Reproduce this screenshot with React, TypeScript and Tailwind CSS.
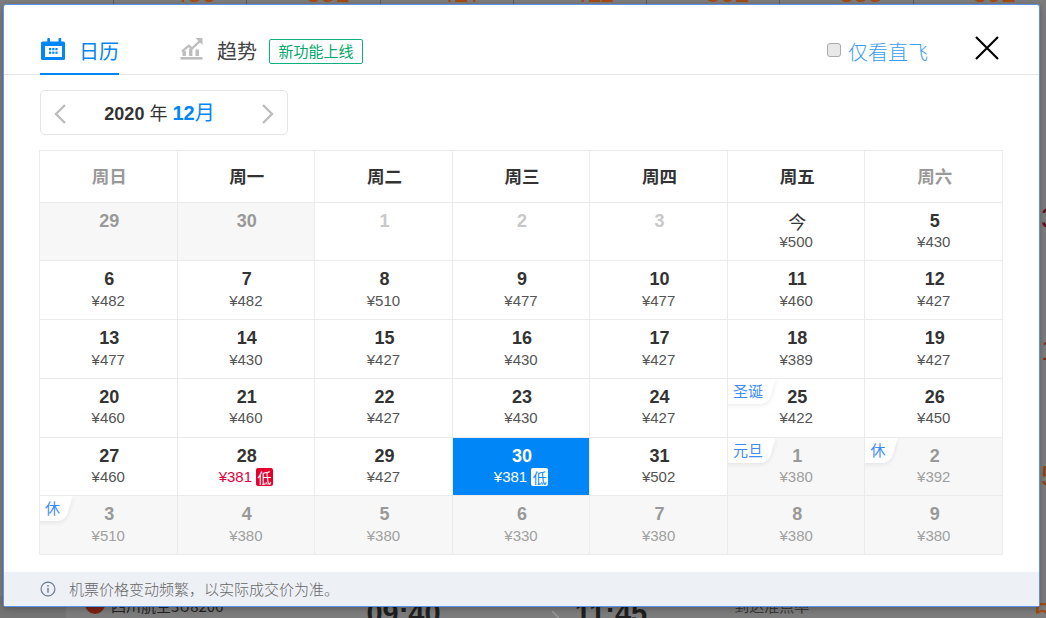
const weekdays = [
  { t: "周日", off: true },
  { t: "周一" },
  { t: "周二" },
  { t: "周三" },
  { t: "周四" },
  { t: "周五" },
  { t: "周六", off: true },
];

type Cell = {
  d: string;
  p?: string;
  kind?: "past" | "muted" | "next";
  tag?: string;
  low?: boolean;
  sel?: boolean;
};

const rows: Cell[][] = [
  [
    { d: "29", kind: "past" },
    { d: "30", kind: "past" },
    { d: "1", kind: "muted" },
    { d: "2", kind: "muted" },
    { d: "3", kind: "muted" },
    { d: "今", p: "500" },
    { d: "5", p: "430" },
  ],
  [
    { d: "6", p: "482" },
    { d: "7", p: "482" },
    { d: "8", p: "510" },
    { d: "9", p: "477" },
    { d: "10", p: "477" },
    { d: "11", p: "460" },
    { d: "12", p: "427" },
  ],
  [
    { d: "13", p: "477" },
    { d: "14", p: "430" },
    { d: "15", p: "427" },
    { d: "16", p: "430" },
    { d: "17", p: "427" },
    { d: "18", p: "389" },
    { d: "19", p: "427" },
  ],
  [
    { d: "20", p: "460" },
    { d: "21", p: "460" },
    { d: "22", p: "427" },
    { d: "23", p: "430" },
    { d: "24", p: "427" },
    { d: "25", p: "422", tag: "圣诞" },
    { d: "26", p: "450" },
  ],
  [
    { d: "27", p: "460" },
    { d: "28", p: "381", low: true },
    { d: "29", p: "427" },
    { d: "30", p: "381", low: true, sel: true },
    { d: "31", p: "502" },
    { d: "1", p: "380", kind: "next", tag: "元旦" },
    { d: "2", p: "392", kind: "next", tag: "休" },
  ],
  [
    { d: "3", p: "510", kind: "next", tag: "休" },
    { d: "4", p: "380", kind: "next" },
    { d: "5", p: "380", kind: "next" },
    { d: "6", p: "330", kind: "next" },
    { d: "7", p: "380", kind: "next" },
    { d: "8", p: "380", kind: "next" },
    { d: "9", p: "380", kind: "next" },
  ],
];

const rowHeights = ["h-[58px]", "h-[59px]", "h-[59px]", "h-[59px]", "h-[58px]", "h-[59px]"];
const priceGaps = ["mt-0", "mt-[1px]", "mt-[1px]", "mt-0", "mt-0", "mt-[1px]"];
const behindPrices = ["480", "381", "427", "411", "502", "388", "392"];

function DayCell({ c, gap }: { c: Cell; gap: string }) {
  const bg = c.sel
    ? "bg-[#0086f6]"
    : c.kind === "past" || c.kind === "next"
      ? "bg-[#f7f7f7]"
      : "bg-white";
  const dayColor = c.sel
    ? "text-white"
    : c.kind === "muted"
      ? "text-[#c8c8c8]"
      : c.kind === "past" || c.kind === "next"
        ? "text-[#999999]"
        : "text-[#333333]";
  const priceColor = c.sel
    ? "text-white"
    : c.low
      ? "text-[#e5003b]"
      : c.kind === "next"
        ? "text-[#a0a0a0]"
        : "text-[#555555]";
  return (
    <div
      className={`relative overflow-hidden flex-1 basis-0 flex flex-col items-center pt-[7px] border-l border-[#ebebeb] first:border-l-0 ${bg}`}
    >
      {c.tag && (
        <div className="absolute left-0 top-0 h-[25px] text-[15px] leading-[24px] text-[#3d8cf5] font-['Noto_Sans_CJK_SC',sans-serif]">
          <div className="absolute -left-[10px] top-0 right-0 h-[25px] bg-white rounded-br-[8px] -skew-x-[16deg] shadow-[1px_2px_4px_rgba(0,0,0,0.07)]" />
          <span className="relative block pl-[5px] pr-[9px] whitespace-nowrap">{c.tag}</span>
        </div>
      )}
      <div
        className={`text-[18px] leading-[22px] pl-[2px] ${c.d === "今" ? "font-normal font-['Noto_Sans_CJK_SC',sans-serif]" : "font-bold"} ${dayColor}`}
      >
        {c.d}
      </div>
      {c.p && (
        <div className={`${gap} flex items-center text-[15px] leading-[20px] ${priceColor}`}>
          <span>¥{c.p}</span>
          {c.low && (
            <span
              className={`ml-[4px] w-[17px] h-[18px] rounded-[2px] flex items-center justify-center text-[14px] leading-none font-['Noto_Sans_CJK_SC',sans-serif] ${
                c.sel ? "bg-white text-[#0086f6]" : "bg-[#e5002d] text-white"
              }`}
            >
              低
            </span>
          )}
        </div>
      )}
    </div>
  );
}

function CalendarIcon() {
  return (
    <svg width="24" height="24" viewBox="0 0 24 24" className="shrink-0">
      <rect x="0" y="5.5" width="24" height="18.5" rx="1.5" fill="#0086f6" />
      <rect x="4" y="10" width="17" height="11" fill="#fff" />
      <rect x="6.3" y="2" width="2.7" height="5" rx="0.8" fill="#0086f6" />
      <rect x="17.5" y="2" width="2.7" height="5" rx="0.8" fill="#0086f6" />
      <g fill="#0086f6">
        <rect x="8" y="12" width="2.2" height="2.2" />
        <rect x="11.2" y="12" width="2.2" height="2.2" />
        <rect x="14.4" y="12" width="2.2" height="2.2" />
        <rect x="8" y="15.6" width="2.2" height="2.2" />
        <rect x="11.2" y="15.6" width="2.2" height="2.2" />
        <rect x="14.4" y="15.6" width="2.2" height="2.2" />
      </g>
    </svg>
  );
}

function TrendIcon() {
  return (
    <svg width="24" height="24" viewBox="0 0 24 24" className="shrink-0">
      <g fill="#bdbdbd">
        <rect x="0.5" y="21" width="22" height="2.6" />
        <rect x="2.5" y="15" width="3.4" height="5" />
        <rect x="9" y="12.5" width="3.4" height="7.5" />
        <rect x="15.5" y="13.5" width="3.4" height="6.5" />
        <path d="M15.5 2h7v7l-2.4-2.4-8.1 7.4-3.2-2.8-6 5-1.5-1.7 7.5-6.3 3.2 2.8 6.4-6.1z" />
      </g>
    </svg>
  );
}

export default function App() {
  return (
    <div className="relative w-[1046px] h-[618px] overflow-hidden bg-[#7c7c7c] font-['Liberation_Sans','Noto_Sans_CJK_SC',sans-serif]">
      {/* the dimmed page behind the dialog */}
      <div className="flex pl-[113px] h-[4px] overflow-hidden">
        {behindPrices.map((p) => (
          <div key={p} className="w-[135px] h-[4px] border-l border-[#5f5f5f] relative overflow-hidden">
            <span className="absolute left-[59px] -top-[21px] text-[26px] leading-[28px] text-[#a34a12] whitespace-nowrap">
              {p}
            </span>
          </div>
        ))}
      </div>
      <span className="absolute left-[1041px] top-[202px] text-[30px] leading-[32px] text-[#6a0f18]">3</span>
      <span className="absolute left-[1041px] top-[334px] text-[30px] leading-[32px] text-[#8b2a10]">1</span>
      <span className="absolute left-[1041px] top-[460px] text-[30px] leading-[32px] text-[#9a4010]">5</span>
      <div className="absolute left-0 right-0 top-[596px] h-[22px] flex items-start overflow-hidden">
        <div className="w-[66px] h-[22px] bg-[#747474] shrink-0" />
        <div className="ml-[19px] mt-[-2px] w-[20px] h-[20px] rounded-full bg-[#7a2413] shrink-0" />
        <span className="ml-[6px] mt-[2px] text-[15px] leading-[16px] text-[#222222] font-['Noto_Sans_CJK_SC',sans-serif] whitespace-nowrap">
          四川航空3U8206
        </span>
        <span className="ml-[143px] text-[29px] leading-[34px] font-bold text-[#1f1f1f]">09:40</span>
        <svg width="10" height="22" viewBox="0 0 10 22" className="ml-[110px] shrink-0">
          <path d="M1 15 L8 22" stroke="#9a9a9a" strokeWidth="1.5" />
        </svg>
        <span className="ml-[14px] text-[29px] leading-[34px] font-bold text-[#1f1f1f]">11:45</span>
        <span className="ml-[87px] mt-[2px] text-[15px] leading-[16px] text-[#3a3a3a] font-['Noto_Sans_CJK_SC',sans-serif] whitespace-nowrap">
          到达准点率
        </span>
        <span className="ml-[225px] text-[30px] leading-[34px] text-[#a34a12]">5</span>
      </div>

      {/* dialog */}
      <div className="absolute left-[3px] top-[4px] w-[1037px] h-[603px] bg-white flex flex-col rounded-[3px] border border-[#5b93e8] shadow-[0_2px_6px_rgba(0,0,0,0.25)]">
        <div className="h-[70px] border-b border-[#e4e4e4] flex pl-[36px] pr-[39px] shrink-0">
          <div className="w-[79px] h-[70px] border-b-2 border-[#0086f6] flex items-start pt-[31px] gap-[14px] pl-[1px]">
            <CalendarIcon />
            <span className="text-[20px] leading-[30px] text-[#0086f6] font-['Noto_Sans_CJK_SC',sans-serif]">日历</span>
          </div>
          <div className="ml-[61px] flex items-start pt-[31px]">
            <TrendIcon />
            <span className="ml-[13px] text-[20px] leading-[30px] text-[#444444] font-['Noto_Sans_CJK_SC',sans-serif]">趋势</span>
            <span className="ml-[12px] mt-[3px] w-[94px] h-[25px] border border-[#12b07c] rounded-[2px] text-[15px] leading-[22px] text-center text-[#00a86b] font-['Noto_Sans_CJK_SC',sans-serif]">
              新功能上线
            </span>
          </div>
          <div className="ml-auto flex items-start pt-[33px]">
            <span className="mt-[5px] w-[14px] h-[14px] rounded-[3px] border border-[#aaaaaa] bg-[#e8e8e8]" />
            <span className="ml-[7px] text-[20px] leading-[27px] text-[#3a9cf0] font-['Noto_Sans_CJK_SC',sans-serif] font-light">仅看直飞</span>
            <svg width="26" height="26" viewBox="0 0 26 26" className="ml-[46px] -mt-[3px]">
              <path d="M2 2 L24 24 M24 2 L2 24" stroke="#000" strokeWidth="2.2" />
            </svg>
          </div>
        </div>

        <div className="ml-[36px] mt-[15px] w-[248px] h-[45px] border border-[#e4e4e4] rounded-[5px] flex items-center justify-between pl-[12px] pr-[13px] shrink-0">
          <svg width="14" height="22" viewBox="0 0 14 22" className="mt-[3px]">
            <path d="M12 2 L3 11 L12 20" stroke="#bdbdbd" strokeWidth="2.4" fill="none" />
          </svg>
          <div className="text-[18px] leading-[24px] font-bold text-[#333333] -ml-[8px] mt-[2px]">
            2020 <span className="font-normal">年</span>{" "}
            <span className="text-[#0086f6] text-[20px]">12<span className="font-normal">月</span></span>
          </div>
          <svg width="14" height="22" viewBox="0 0 14 22" className="mt-[3px] relative left-[1px]">
            <path d="M2 2 L11 11 L2 20" stroke="#bdbdbd" strokeWidth="2.4" fill="none" />
          </svg>
        </div>

        <div className="ml-[35px] mt-[15px] w-[964px] border border-[#ebebeb] shrink-0">
          <div className="flex h-[51px]">
            {weekdays.map((w) => (
              <div
                key={w.t}
                className={`flex-1 basis-0 flex items-center justify-center pl-[2px] border-l border-[#ebebeb] first:border-l-0 text-[17.5px] font-bold font-['Noto_Sans_CJK_SC',sans-serif] ${
                  w.off ? "text-[#999999]" : "text-[#333333]"
                }`}
              >
                {w.t}
              </div>
            ))}
          </div>
          {rows.map((r, i) => (
            <div key={i} className={`flex border-t border-[#ebebeb] ${rowHeights[i]}`}>
              {r.map((c, j) => (
                <DayCell key={j} c={c} gap={priceGaps[i]} />
              ))}
            </div>
          ))}
        </div>

        <div className="mt-auto h-[34px] bg-[#edf0f5] flex items-center pl-[36px] shrink-0">
          <svg width="16" height="16" viewBox="0 0 16 16" className="shrink-0">
            <circle cx="8" cy="8" r="6.9" fill="none" stroke="#6b7a90" strokeWidth="1.2" />
            <rect x="7.3" y="6.8" width="1.4" height="5" fill="#6b7a90" />
            <rect x="7.3" y="4" width="1.4" height="1.6" fill="#6b7a90" />
          </svg>
          <span className="ml-[13px] text-[15px] text-[#666666] font-['Noto_Sans_CJK_SC',sans-serif] font-light">
            机票价格变动频繁，以实际成交价为准。
          </span>
        </div>
      </div>
    </div>
  );
}
